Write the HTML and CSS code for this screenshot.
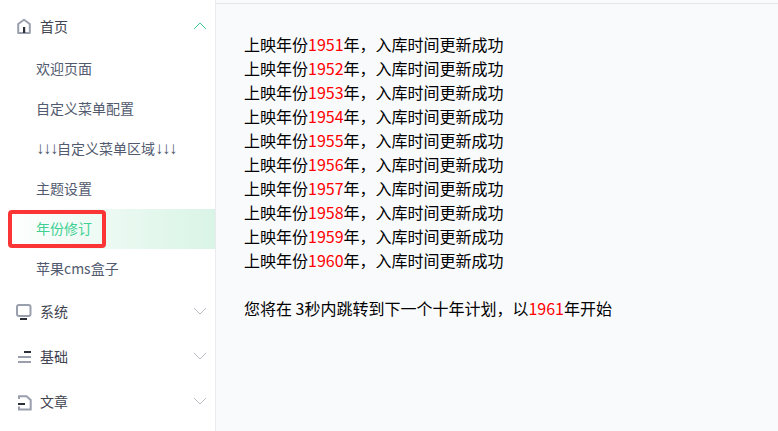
FILE: index.html
```html
<!DOCTYPE html>
<html lang="zh-CN">
<head>
<meta charset="utf-8">
<title>年份修订</title>
<link rel="stylesheet" href="styles.css">
</head>
<body>
<div class="app">
  <aside class="sidebar">
    <div class="group open">
      <svg class="ico" viewBox="0 0 16 16"><path class="g" d="M2.2 15V6L8 1.8 13.8 6v9z" fill="none" stroke-width="2" stroke-linejoin="round"/><path class="d" d="M7 9h2.2v6H7z"/></svg>
      <span class="label">首页</span>
      <svg class="chev up" viewBox="0 0 14 8"><path d="M1 7l6-6 6 6" fill="none" stroke-width="1"/></svg>
    </div>
    <a class="sub">欢迎页面</a>
    <a class="sub">自定义菜单配置</a>
    <a class="sub"><span class="arrows">↓↓↓</span>自定义菜单区域<span class="arrows">↓↓↓</span></a>
    <a class="sub">主题设置</a>
    <a class="sub active">年份修订</a>
    <a class="sub">苹果cms盒子</a>
    <div class="group">
      <svg class="ico" viewBox="0 0 16 16"><rect class="g" x="1" y="2" width="13.5" height="11" rx="2" fill="none" stroke-width="2"/><path class="d" d="M4 15h7v2H4z"/></svg>
      <span class="label">系统</span>
      <svg class="chev" viewBox="0 0 14 8"><path d="M1 1l6 6 6-6" fill="none" stroke-width="1"/></svg>
    </div>
    <div class="group">
      <svg class="ico" viewBox="0 0 16 16"><path class="d" d="M8 3h7v2H8z"/><path class="f" d="M2 8h13v2H2zM2 13h13v2H2z"/></svg>
      <span class="label">基础</span>
      <svg class="chev" viewBox="0 0 14 8"><path d="M1 1l6 6 6-6" fill="none" stroke-width="1"/></svg>
    </div>
    <div class="group">
      <svg class="ico" viewBox="0 0 16 16"><path class="g" d="M3 6V3.3h7.5L14.7 7v9.6H3v-3" fill="none" stroke-width="2"/><path class="d" d="M2 10h7v2H2z"/></svg>
      <span class="label">文章</span>
      <svg class="chev" viewBox="0 0 14 8"><path d="M1 1l6 6 6-6" fill="none" stroke-width="1"/></svg>
    </div>
    <div class="mark"></div>
  </aside>
  <main class="main">
    <div class="log">
      <p>上映年份<b>1951</b>年，入库时间更新成功</p>
      <p>上映年份<b>1952</b>年，入库时间更新成功</p>
      <p>上映年份<b>1953</b>年，入库时间更新成功</p>
      <p>上映年份<b>1954</b>年，入库时间更新成功</p>
      <p>上映年份<b>1955</b>年，入库时间更新成功</p>
      <p>上映年份<b>1956</b>年，入库时间更新成功</p>
      <p>上映年份<b>1957</b>年，入库时间更新成功</p>
      <p>上映年份<b>1958</b>年，入库时间更新成功</p>
      <p>上映年份<b>1959</b>年，入库时间更新成功</p>
      <p>上映年份<b>1960</b>年，入库时间更新成功</p>
      <p class="next">您将在 3秒内跳转到下一个十年计划，以<b>1961</b>年开始</p>
    </div>
  </main>
</div>
</body>
</html>
```
FILE: styles.css
```css
* { box-sizing: border-box; }
html, body { margin: 0; height: 100%; overflow: hidden; }
body { font-family: "Noto Sans CJK SC", "Noto Sans", sans-serif; background: #f9fafc; }
.app { display: flex; height: 431px; }
.sidebar { position: relative; width: 216px; flex: none; background: #fff; border-right: 1px solid #e9ebef; padding-top: 4px; overflow: hidden; }
.group { display: flex; align-items: center; height: 45px; padding: 0 8px 2px 16px; font-size: 14px; }
.ico { width: 16px; height: 16px; flex: none; margin-top: 1px; overflow: visible; }
.g { stroke: #9a9fae; }
.f { fill: #9a9fae; }
.d { fill: #2b2f3a; }
.label { margin-left: 8px; flex: 1; color: #3f4450; }
.chev { width: 14px; height: 8px; flex: none; color: #b9bdc6; }
.chev path { stroke: currentColor; }
.chev.up { color: #41d094; }
.sub { display: flex; align-items: center; height: 40px; padding: 0 0 2px 36px; font-size: 14px; color: #515a6e; white-space: nowrap; }
.arrows { font-family: "Liberation Serif", serif; font-size: 17px; letter-spacing: -1.5px; line-height: 1; }
.sub.active { color: #41d094; background: linear-gradient(90deg, #fff 0%, #d9f4e6 100%); }
.mark { position: absolute; left: 8px; top: 210px; width: 98px; height: 38px; border: 4px solid #fb3535; border-radius: 4px; }
.main { flex: 1; border-top: 1px solid #e6e6e6; margin-top: 3px; padding: 28px 28px; }
.log { color: #000; font-size: 16px; line-height: 24px; }
.log p { margin: 0; white-space: nowrap; }
.log b { font-weight: 400; color: #f00; }
.log .next { margin-top: 24px; }
```
